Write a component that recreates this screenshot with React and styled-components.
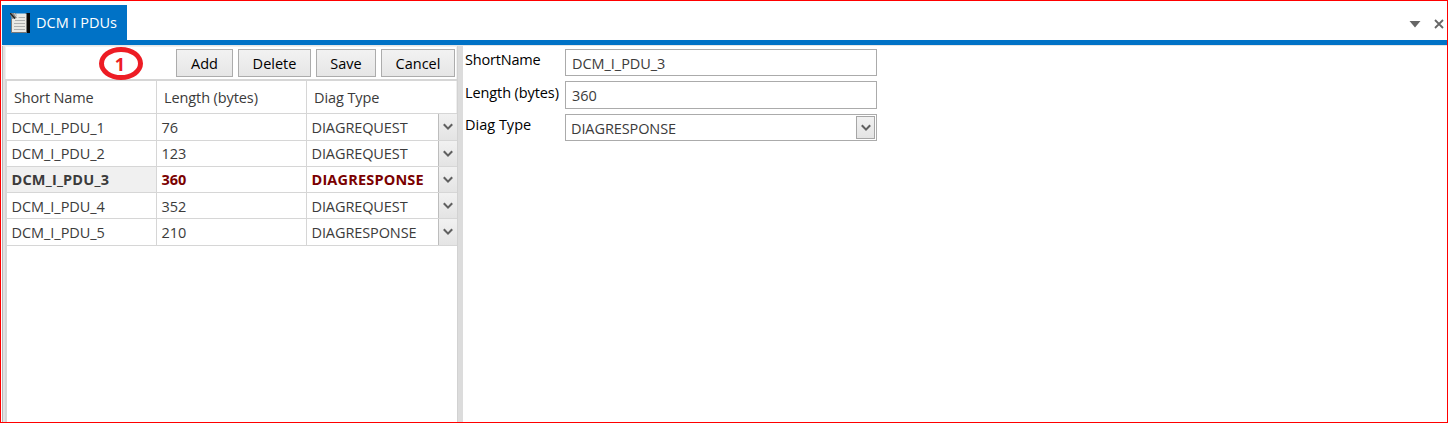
import React from "react";
import styled, { createGlobalStyle } from "styled-components";

const GlobalStyle = createGlobalStyle`
  * { box-sizing: border-box; }
  body { margin: 0; background: #fff; overflow: hidden; }
`;

const Window = styled.main`
  width: 1448px;
  height: 423px;
  display: flex;
  flex-direction: column;
  border: 1px solid #ff0000;
  background: #fff;
  font: 15px/20px "Open Sans", "Noto Sans", sans-serif;
  color: #3b3b3b;
  white-space: nowrap;
`;

const TabStrip = styled.header`
  height: 44px;
  margin-left: 1px;
  padding-top: 4px;
  display: flex;
  justify-content: space-between;
  border-bottom: 5px solid #0072c6;
`;

const Tab = styled.div`
  width: 125px;
  padding: 1px 0 0 8px;
  display: flex;
  align-items: center;
  gap: 6px;
  background: #0072c6;
  color: #fff;
`;

const StripActions = styled.div`
  display: flex;
  align-items: flex-start;
  gap: 13px;
  padding: 14px 3.5px 0 0;
`;

const Text = styled.span`
  display: inline-block;
  font-size: 14.5px;
  letter-spacing: ${(p) => p.$track || 0}px;
`;

const Body = styled.div`
  flex: 1;
  min-height: 0;
  display: flex;
  margin-left: 1px;
  border-top: 1px solid #e6e6e6;
`;

const ListPane = styled.section`
  width: 455px;
  display: flex;
  flex-direction: column;
  border-left: 1px solid #b4b4b4;
  box-shadow: inset 2px 0 #e2e2e2;
  padding-left: 2px;
`;

const Toolbar = styled.div`
  height: 33px;
  padding: 2px 1px 0 94px;
  display: flex;
  align-items: flex-start;
  gap: 5px;
  border: 1px solid #f0f0f0;
  border-width: 1px 1px 0;
`;

const Marker = styled.div`
  position: relative;
  width: 44px;
  height: 33px;
  margin: -2px 28px 0 -1px;
  padding: 1px 2px 0 0;
  display: flex;
  align-items: center;
  justify-content: center;
  border: 5px solid #ed1c24;
  border-radius: 50%;
  color: #ed1c24;
  font: 700 18px/22px "Open Sans", sans-serif;
`;

const Button = styled.button`
  width: ${(p) => p.$width}px;
  height: 28px;
  flex: none;
  padding: 1px 0 0;
  border: 1px solid #acacac;
  background: linear-gradient(#f2f2f2, #e6e6e6);
  font: 15px/20px "Open Sans", sans-serif;
  color: #000;
`;

const Grid = styled.div`
  flex: 1;
  border-left: 2px solid #d6d6d6;
  border-top: 2px solid #d6d6d6;
`;

const HeaderRow = styled.div`
  display: grid;
  grid-template-columns: 150px 150px 1fr;
  height: 33px;
  border-bottom: 1px solid #d6d6d6;
`;

const HeaderCell = styled.div`
  padding: 6px 0 0 7px;
  border-right: 1px solid #d6d6d6;
  &:last-child { border-right-color: #eee; }
`;

const Row = styled.div`
  display: grid;
  grid-template-columns: 150px 150px 132px 1fr;
  height: ${(p) => p.$height}px;
  border-bottom: 1px solid #d6d6d6;
  font-weight: ${(p) => (p.$selected ? 700 : 400)};
  color: ${(p) => (p.$selected ? "#7a0000" : "#3b3b3b")};
  & > :first-child {
    color: #3b3b3b;
    background: ${(p) => (p.$selected ? "#f0f0f0" : "#fff")};
  }
`;

const Cell = styled.div`
  padding: ${(p) => p.$top}px 0 0 4.5px;
  border-right: 1px solid ${(p) => (p.$last ? "#bdbdbd" : "#d6d6d6")};
`;

const DropButton = styled.div`
  display: flex;
  align-items: center;
  justify-content: center;
  background: linear-gradient(#f1f1f1, #e4e4e4);
`;

const Splitter = styled.div`
  width: 6px;
  background: #dcdcdc;
  border-left: 1px solid #d2d2d2;
`;

const Form = styled.section`
  padding: 3px 0 0 2px;
  display: grid;
  grid-template-columns: 100px 312px;
  grid-template-rows: 27px 28px 27px;
  row-gap: 5px;
  color: #000;
`;

const Label = styled.label`
  padding-top: ${(p) => p.$top}px;
`;

const Field = styled.div`
  display: flex;
  justify-content: space-between;
  align-items: center;
  border: 1px solid #ababab;
  padding: 2px 1px 0 ${(p) => p.$left}px;
  color: #3b3b3b;
`;

const SelectButton = styled(DropButton)`
  width: 19px;
  height: 23px;
  margin-top: -2px;
  border: 1px solid #a6a6a6;
`;

const Chevron = () => (
  <svg width="10" height="8" viewBox="0 0 10 8">
    <path d="M0.8 1.2L5 5.6L9.2 1.2" fill="none" stroke="#606060" strokeWidth="2.1" />
  </svg>
);

const NotebookIcon = () => (
  <svg width="20" height="20" viewBox="0 0 20 20">
    <rect x="15.5" width="4.5" height="20" fill="#080808" />
    <path d="M5 0.5H16.5V20H1.5V6Z" fill="#e9e9e5" />
    <path d="M0 0H6L7 5L1.5 6Z" fill="#85898a" />
    <path d="M0 0L5 5.5" stroke="#222" strokeWidth="1.4" />
    <path d="M4.5 0.5L7 4.5" stroke="#e0e0de" strokeWidth="1" />
    <path d="M8.5 4.5H15M5 7.5H15M4 10.5H15M4 13.5H15M4 16.5H15" stroke="#aeb0b0" />
    <path d="M1.5 6V19.5H16" fill="none" stroke="#777" />
  </svg>
);

const rows = [
  { name: "DCM_I_PDU_1", length: "76", type: "DIAGREQUEST", height: 27, top: 3 },
  { name: "DCM_I_PDU_2", length: "123", type: "DIAGREQUEST", height: 26, top: 2 },
  { name: "DCM_I_PDU_3", length: "360", type: "DIAGRESPONSE", height: 26, top: 2, selected: true },
  { name: "DCM_I_PDU_4", length: "352", type: "DIAGREQUEST", height: 26, top: 3 },
  { name: "DCM_I_PDU_5", length: "210", type: "DIAGRESPONSE", height: 27, top: 3 },
];

export default function App() {
  return (
    <Window>
      <GlobalStyle />
      <TabStrip>
        <Tab>
          <NotebookIcon />
          <Text>DCM I PDUs</Text>
        </Tab>
        <StripActions>
          <svg width="12" height="10" viewBox="0 0 12 10">
            <path d="M0.5 2H11.5L6 8.5Z" fill="#666" />
          </svg>
          <svg width="10" height="10" viewBox="0 0 10 10">
            <path d="M1 1L9 9M9 1L1 9" stroke="#666" strokeWidth="1.8" />
          </svg>
        </StripActions>
      </TabStrip>
      <Body>
        <ListPane>
          <Toolbar>
            <Marker>1</Marker>
            <Button $width={57}><Text>Add</Text></Button>
            <Button $width={73}><Text>Delete</Text></Button>
            <Button $width={60}><Text>Save</Text></Button>
            <Button $width={74}><Text>Cancel</Text></Button>
          </Toolbar>
          <Grid>
            <HeaderRow>
              <HeaderCell><Text $track={-0.15}>Short Name</Text></HeaderCell>
              <HeaderCell><Text $track={-0.1}>Length (bytes)</Text></HeaderCell>
              <HeaderCell><Text $track={-0.1}>Diag Type</Text></HeaderCell>
            </HeaderRow>
            {rows.map(({ name, length, type, height, top, selected }) => (
              <Row key={name} $height={height} $selected={selected}>
                <Cell $top={top}><Text $track={selected ? 0.2 : -0.05}>{name}</Text></Cell>
                <Cell $top={top}><Text>{length}</Text></Cell>
                <Cell $top={top} $last><Text $track={selected ? 0.17 : -0.1}>{type}</Text></Cell>
                <DropButton><Chevron /></DropButton>
              </Row>
            ))}
          </Grid>
        </ListPane>
        <Splitter />
        <Form>
          <Label $top={0}><Text $track={-0.2}>ShortName</Text></Label>
          <Field $left={6}><Text $track={-0.05}>DCM_I_PDU_3</Text></Field>
          <Label $top={1}><Text $track={-0.1}>Length (bytes)</Text></Label>
          <Field $left={6}><Text>360</Text></Field>
          <Label $top={0}><Text>Diag Type</Text></Label>
          <Field $left={5}>
            <Text $track={-0.1}>DIAGRESPONSE</Text>
            <SelectButton><Chevron /></SelectButton>
          </Field>
        </Form>
      </Body>
    </Window>
  );
}
